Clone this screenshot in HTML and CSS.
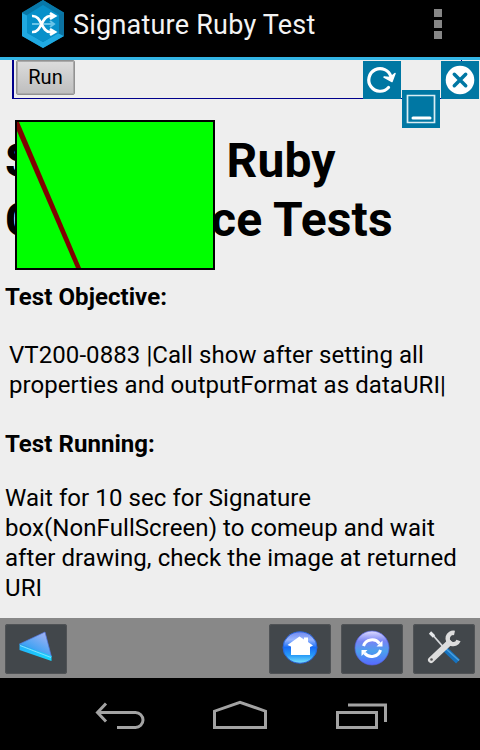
FILE: index.html
```html
<!DOCTYPE html>
<html lang="en">
<head>
<meta charset="utf-8">
<title>Signature Ruby Test</title>
<link rel="stylesheet" href="styles.css">
</head>
<body>
<header class="appbar">
  <svg class="logo" width="42" height="48" viewBox="0 0 42 48">
    <path fill="#087aa8" d="M21 0 42 13 21 24 0 13z"/>
    <path fill="#0878a9" d="M0 12.500 21 0 42 12.500V36L21 48 0 36z"/>
    <path fill="#20a9e1" d="M0 13 6 16V33L21 42 36 33 42 36 21 48 0 36z"/>
    <path fill="#0b72a1" d="M36 16 42 13V36L36 33z"/>
    <path fill="#0790ca" d="M21 5 37 15V33L21 42 5 33V15z"/>
    <path stroke="#69c4e8" stroke-width="2" fill="none" d="M10 24H31M28 21l4 3-4 3"/>
    <path stroke="#fff" stroke-width="2.600" fill="none" d="M10 16c10-1 9 16 18 16h4M10 32c10 1 9-16 18-16h4M28 13l5 3-5 3M28 29l5 3-5 3"/>
  </svg>
  <h1 class="title">Signature Ruby Test</h1>
  <div class="overflow"><i></i><i></i><i></i></div>
</header>
<main class="page">
  <div class="runbox"><button class="run">Run</button></div>
  <h2 class="heading">Signature Ruby<br>Compliance Tests</h2>
  <h3 class="label">Test Objective:</h3>
  <p class="objective">VT200-0883 |Call show after setting all<br>properties and outputFormat as dataURI|</p>
  <h3 class="label">Test Running:</h3>
  <p class="running">Wait for 10 sec for Signature<br>box(NonFullScreen) to comeup and wait<br>after drawing, check the image at returned<br>URI</p>
  <svg class="signature" width="200" height="150" viewBox="0 0 200 150">
    <path fill="#000" d="M0 0h200v150H0z"/>
    <path fill="#0f0" d="M2 2h196v146H2z"/>
    <path fill="#800000" d="M2 2h2L66 148h-5L2 11z"/>
  </svg>
  <svg class="tile reload" width="38" height="38" viewBox="0 0 38 38">
    <path fill="#0077a3" d="M0 0h38v38H0z"/>
    <path fill="none" stroke="#fff" stroke-width="3.200" stroke-linecap="round" d="M25.500 26.500A11.300 11.300 0 1 1 28 16"/>
    <path fill="#fff" stroke="#fff" stroke-width="1.500" stroke-linejoin="round" d="M21 16 27 16.500 32 12.500 29 20.500z"/>
  </svg>
  <svg class="tile minimize" width="38" height="38" viewBox="0 0 38 38">
    <path fill="#0077a3" d="M0 0h38v38H0z"/>
    <path fill="none" stroke="#d9edf4" stroke-width="1.700" d="M5.500 5.500h27v27h-27z"/>
    <path stroke="#fff" stroke-width="3" stroke-linecap="round" d="M11 28h17"/>
  </svg>
  <svg class="tile close" width="38" height="38" viewBox="0 0 38 38">
    <path fill="#0077a3" d="M0 0h38v38H0z"/>
    <circle cx="19" cy="19" r="14.300" fill="#fff"/>
    <path stroke="#0077a3" stroke-width="3.500" stroke-linecap="round" d="m13.300 13.300 11.400 11.400m0-11.400L13.300 24.700"/>
  </svg>
</main>
<footer class="toolbar">
  <span class="tool back"><svg width="62" height="50" viewBox="0 0 62 50">
    <defs>
      <linearGradient id="facet" x1="1" y1="0" x2="0.300" y2="1"><stop stop-color="#b4b4f3"/><stop offset="1" stop-color="#169cf4"/></linearGradient>
      <linearGradient id="edge"><stop stop-color="#23b4fa"/><stop offset="1" stop-color="#15d8ff"/></linearGradient>
    </defs>
    <path fill="url(#facet)" stroke="#5275dc" stroke-width=".7" d="M14.500 20 40 8l6.500 25z"/>
    <path fill="url(#edge)" d="M14.500 20 46.500 32v5L14.500 26z"/>
    <path stroke="#86dcff" stroke-width="1" d="m15 21.500 31 12"/>
  </svg></span>
  <span class="tool"><svg width="62" height="50" viewBox="0 0 62 50">
    <defs><linearGradient id="home" x2="0" y2="1"><stop stop-color="#7187ed"/><stop offset=".25" stop-color="#9ab7ff"/><stop offset=".5" stop-color="#176df6"/><stop offset=".75" stop-color="#279bf8"/><stop offset="1" stop-color="#7ce4fc"/></linearGradient></defs>
    <ellipse cx="31" cy="23.500" rx="17" ry="15.700" fill="url(#home)" stroke="#2864dc" stroke-width="1"/>
    <path fill="#fff" d="m18.500 21 12-8.500 4.500 3v-2h4v4.500l5 3.500-3 1.500V31H22v-8.500z"/>
  </svg></span>
  <span class="tool"><svg width="62" height="50" viewBox="0 0 62 50">
    <defs><linearGradient id="sync" x2="0" y2="1"><stop stop-color="#dfdcff"/><stop offset=".3" stop-color="#7884f5"/><stop offset=".6" stop-color="#4ba0ed"/><stop offset="1" stop-color="#5769ff"/></linearGradient></defs>
    <circle cx="31" cy="24" r="17" fill="url(#sync)" stroke="#5362e2" stroke-width=".7"/>
    <path fill="none" stroke="#fff" stroke-width="3" d="M22.500 22a9 8.500 0 0 1 16-2.500M39.500 26a9 8.500 0 0 1-16 3"/>
    <path fill="#fff" d="M35.500 22.500h6v-6zM26.500 26h-6v6z"/>
  </svg></span>
  <span class="tool"><svg width="62" height="50" viewBox="0 0 62 50">
    <path stroke="#d8dadd" stroke-width="1.800" d="m18 9 14 16"/>
    <path stroke="#e5e7e9" stroke-width="3.200" d="m17 8.500 4 4"/>
    <path stroke="#1672be" stroke-width="5.500" d="m31 24 14 13.500"/>
    <path stroke="#4ba0df" stroke-width="1.500" d="m32 24 14 12.500"/>
    <path stroke="#ddd" stroke-width="6" stroke-linecap="round" d="M18 36 36 19"/>
    <path fill="none" stroke="#ddd" stroke-width="4.500" d="M41.500 9a5.600 5.600 0 1 0 4 7.500"/>
    <circle cx="18.500" cy="35.500" r="1.300" fill="#555"/>
  </svg></span>
</footer>
<nav class="navbar">
  <svg width="480" height="72" viewBox="0 0 480 72" fill="none" stroke="#a3a3a3" stroke-width="3">
    <path d="M98 34.500h37.500a7.500 7.500 0 0 1 0 15H117M106 25.500l-8.500 9 8.500 9"/>
    <path d="M214.500 49.500V33.200L240 24.300l25.500 8.900v16.300z"/>
    <path d="M337.500 34.500h39v15h-39zM348 27h37.500v17"/>
  </svg>
</nav>
</body>
</html>
```
FILE: styles.css
```css
* { box-sizing: border-box; }
body {
  margin: 0;
  width: 480px;
  height: 750px;
  overflow: hidden;
  display: flex;
  flex-direction: column;
  background: #000;
  color: #000;
  font-family: Roboto, "Liberation Sans", sans-serif;
}
svg { display: block; }
h1, h2, h3, p { margin: 0; white-space: nowrap; }
.appbar {
  height: 60px;
  flex: none;
  display: flex;
  align-items: flex-start;
  padding-left: 22px;
  border-bottom: 3px solid #33b5e5;
  background: #000;
}
.title {
  margin: 8px 0 0 9px;
  font-size: 27px;
  line-height: 34px;
  font-weight: 400;
  letter-spacing: 0.22px;
  color: #f3f3f3;
}
.overflow {
  margin: 9px 38px 0 auto;
  display: grid;
  gap: 3px;
}
.overflow i { width: 8px; height: 8px; background: #868686; }
.page {
  position: relative;
  height: 558px;
  flex: none;
  overflow: hidden;
  background: #eee;
}
.runbox {
  width: 450px;
  height: 39px;
  margin-left: 12px;
  padding-left: 2px;
  border: solid #00008b;
  border-width: 0 1px 1px 2px;
}
.run {
  display: block;
  width: 59px;
  height: 35px;
  padding: 0;
  border: 1px solid #929292;
  box-shadow: inset 0 0 0 1px #aaa;
  border-radius: 2px;
  background: linear-gradient(#dcdcdc, #bebebe);
  font: 20px/30px Roboto, sans-serif;
  padding-bottom: 2px;
  letter-spacing: 0.1px;
  color: #000;
}
.heading {
  margin: 32px 0 0 5px;
  font-size: 48px;
  line-height: 59px;
  font-weight: 700;
  letter-spacing: 0.12px;
}
.label {
  margin: 33px 0 0 5px;
  font-size: 24px;
  line-height: 30px;
  font-weight: 700;
  letter-spacing: 0.06px;
}
.objective, .running { font-size: 24px; line-height: 30px; letter-spacing: 0.07px; }
.objective { margin: 28px 0 0 9px; }
.objective + .label { margin-top: 29px; }
.running { margin: 24px 0 0 5px; }
.signature { position: absolute; left: 15px; top: 60px; }
.tile { position: absolute; top: 1px; }
.reload { left: 363px; }
.minimize { left: 402px; top: 30px; }
.close { left: 441px; }
.toolbar {
  height: 60px;
  flex: none;
  display: flex;
  gap: 10px;
  padding: 6px 5px;
  background: #888;
}
.tool {
  width: 62px;
  height: 50px;
  border-radius: 3px;
  background: #42474b;
  box-shadow: inset 0 0 0 1px #505356;
}
.back { margin-right: auto; }
.navbar { height: 72px; flex: none; background: #000; }
```
